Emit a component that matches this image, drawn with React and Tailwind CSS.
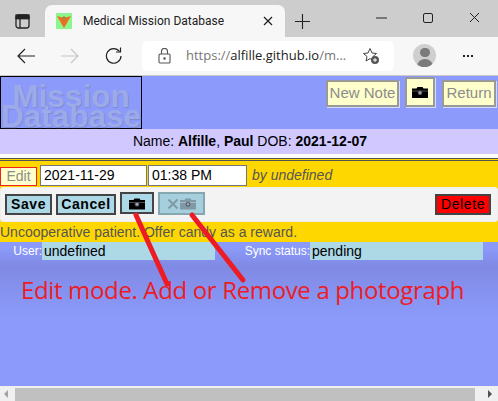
import React from "react";

const sans = "font-['Liberation_Sans',Arial,sans-serif]";

function Camera({ className = "" }) {
  return (
    <svg viewBox="0 0 16 12" className={className}>
      <path d="M0 2.500h4.500l1-1.500h5l1 1.500H16V12H0z" fill="currentColor" />
      <path d="M0 5h16" stroke="#fff" strokeWidth="0.600" opacity="0.500" />
      <circle cx="8" cy="6.800" r="2.400" fill="#556" />
      <circle cx="8" cy="6.800" r="1.200" fill="#aab" />
    </svg>
  );
}

function BrowserChrome() {
  return (
    <div className="shrink-0">
      <div className="flex h-[37px] bg-[#cdcdcd] relative">
        <div className="w-[45px] flex items-center justify-center">
          <svg width="16" height="15" viewBox="0 0 16 15" fill="none" stroke="#222" strokeWidth="1.300" className="mt-[6px]">
            <rect x="1" y="1" width="13" height="13" rx="2.500" />
            <path d="M1 4.500h13M5 4.500V14" />
            <rect x="1" y="1" width="13" height="3.500" fill="#222" />
          </svg>
        </div>
        <div className="mt-[5px] w-[240px] bg-[#f7f7f7] rounded-t-[7px] flex items-center pl-[11px]">
          <svg width="16" height="16" viewBox="0 0 16 16" className="shrink-0">
            <rect width="16" height="16" fill="#8df58d" />
            <path d="M1 3l5 1.500L8 3l2 1.500L15 3 8 15z" fill="#ee6c1f" />
            <path d="M6.500 4h3L8 8z" fill="#7a9a50" />
          </svg>
          <span className="ml-[11px] text-[12px] text-[#222] whitespace-nowrap font-['Roboto',sans-serif]">Medical Mission Database</span>
          <svg width="10" height="10" viewBox="0 0 10 10" className="ml-auto mr-[12px]" stroke="#222" strokeWidth="1.300">
            <path d="M1 1l8 8M9 1L1 9" />
          </svg>
        </div>
        <svg width="15" height="15" viewBox="0 0 15 15" className="ml-[10px] mt-[14px]" stroke="#222" strokeWidth="1.100">
          <path d="M7.500 0v15M0 7.500h15" />
        </svg>
        <div className="ml-auto flex items-center mt-[-2px] pr-[18px] gap-[36px]">
          <svg width="11" height="2" stroke="#222"><path d="M0 1h11" /></svg>
          <svg width="10" height="10" fill="none" stroke="#222"><rect x="0.500" y="0.500" width="9" height="9" rx="1.500" /></svg>
          <svg width="11" height="11" stroke="#222"><path d="M1 1l9 9M10 1l-9 9" /></svg>
        </div>
      </div>
      <div className="flex items-center h-[39px] pb-[1px] bg-[#f7f7f7] border-b border-[#c9c9c9] relative">
        <svg width="18" height="16" viewBox="0 0 18 16" className="ml-[17px]" fill="none" stroke="#222" strokeWidth="1.200">
          <path d="M18 8H1M8 1L1 8l7 7" />
        </svg>
        <svg width="18" height="16" viewBox="0 0 18 16" className="ml-[26px]" fill="none" stroke="#c5c5c5" strokeWidth="1.200">
          <path d="M0 8h17M10 1l7 7-7 7" />
        </svg>
        <svg width="17" height="17" viewBox="0 0 17 17" className="ml-[26px]" fill="none" stroke="#222" strokeWidth="1.200">
          <path d="M14.500 4.500A7.300 7.300 0 1 0 16 9" />
          <path d="M15.500 0.500v4.500H11" />
        </svg>
        <div className="ml-[20px] w-[252px] h-[30px] bg-white rounded-[5px] flex items-center pl-[16px]">
          <svg width="13" height="16" viewBox="0 0 13 16" fill="none" stroke="#555" strokeWidth="1.100">
            <rect x="1" y="6" width="11" height="9" rx="1" />
            <path d="M3.500 6V3.500a3 3 0 0 1 6 0V6" />
            <circle cx="6.500" cy="10.500" r="0.700" fill="#555" />
          </svg>
          <span className="ml-[15px] text-[13px] text-[#777] whitespace-nowrap font-['Open_Sans',sans-serif]">
            https://<span className="text-[#222]">alfille.github.io</span>/m...
          </span>
          <svg width="18" height="18" viewBox="0 0 18 18" className="ml-[16px]">
            <path d="M8 1.500l2 4.500 4.500.5-3.400 3 1 4.500-4.100-2.400L4 14l1-4.500-3.500-3L6 6z" fill="none" stroke="#444" />
            <circle cx="13" cy="13" r="4" fill="#555" />
            <path d="M13 11v4M11 13h4" stroke="#fff" />
          </svg>
        </div>
        <div className="ml-[19px] w-[23px] h-[23px] rounded-full bg-[#cfcfcf] overflow-hidden flex flex-col items-center">
          <div className="mt-[4px] w-[10px] h-[10px] rounded-full bg-[#7b7b7b]" />
          <div className="mt-[2px] w-[16px] h-[10px] rounded-t-full bg-[#7b7b7b]" />
        </div>
        <span className="ml-[27px] flex gap-[2px]">
          <i className="w-[2px] h-[2px] bg-[#222]" />
          <i className="w-[2px] h-[2px] bg-[#222]" />
          <i className="w-[2px] h-[2px] bg-[#222]" />
        </span>
      </div>
    </div>
  );
}

function TopButton({ children, className = "" }) {
  return (
    <div className={`flex items-center justify-center bg-[#ffffcc] border-[2px] border-[#999] shadow-[1px_1px_0_#d5daff] text-[#8c8c8c] text-[15px] ${className}`}>
      {children}
    </div>
  );
}

function EditButton({ children, className = "" }) {
  return (
    <div className={`flex items-center justify-center h-[21px] bg-[#add8e6] border-[2px] border-[#444] font-bold tracking-[0.6px] text-[14px] text-black ${className}`}>
      {children}
    </div>
  );
}

export default function App() {
  return (
    <div className={`w-[498px] h-[401px] overflow-hidden flex flex-col relative ${sans}`}>
      <BrowserChrome />
      <div className="flex-1 min-h-0 flex flex-col bg-[linear-gradient(to_bottom,#8c9bfb_0,#8c9bfb_170px,#808ae4_190px,#8c9bfb_245px)]">
        <div className="flex h-[53px]">
          <div className="w-[142px] h-[53px] border border-black text-center whitespace-nowrap text-[#9caaea] font-bold text-[31.5px] leading-[20px] pt-[9px] [text-shadow:1px_1px_1px_#7f8ad2]">
            <div>Mission</div>
            <div>Database</div>
          </div>
          <div className="ml-auto flex items-start pr-[2px]">
            <TopButton className="mt-[4px] w-[73px] h-[27px]">New Note</TopButton>
            <TopButton className="ml-[6px] mt-[1px] w-[30px] h-[30px]">
              <Camera className="w-[16px] h-[12px] text-black" />
            </TopButton>
            <TopButton className="ml-[7px] mt-[4px] w-[54px] h-[27px]">Return</TopButton>
          </div>
        </div>
        <div className="h-[25px] bg-[#d0c8ff] flex items-center justify-center pl-[2px] text-[14px] text-black">
          <span>Name: <b>Alfille</b>, <b>Paul</b> DOB: <b>2021-12-07</b></span>
        </div>
        <div className="h-[4px] bg-white" />
        <div className="h-[3px] bg-[#ffd700] border-y border-[#555]" />
        <div className="bg-[#ffd700]">
          <div className="flex items-end h-[26px] pb-[1px]">
            <div className="w-[37px] h-[19px] bg-[#ffffcc] border border-[#ee2222] flex items-center justify-center text-[14px] text-[#8c8c8c]">Edit</div>
            <div className="ml-[3px] w-[107px] h-[21px] bg-white border border-[#777] text-[14px] pl-[3px] leading-[19px] text-black">2021-11-29</div>
            <div className="ml-[1px] w-[99px] h-[21px] bg-white border border-[#777] text-[14px] pl-[3px] leading-[19px] text-black">01:38 PM</div>
            <span className="ml-[5px] italic text-[14px] leading-[21px] text-[#555]">by undefined</span>
          </div>
          <div className="flex items-center h-[35px] bg-[#f3f3f3] border border-[#eee] rounded-[3px] pl-[4px] pr-[6px]">
            <EditButton className="w-[47px]">Save</EditButton>
            <EditButton className="ml-[4px] w-[60px]">Cancel</EditButton>
            <EditButton className="ml-[4px] w-[34px] !h-[22px] mb-[3px]">
              <Camera className="w-[16px] h-[13px] text-black" />
            </EditButton>
            <div className="ml-[4px] mb-[2px] w-[47px] h-[23px] bg-[#a6cfdd] border-[2px] border-[#86a7b2] flex items-center justify-center gap-[2px]">
              <svg width="10" height="10" stroke="#7f9aa6" strokeWidth="2"><path d="M0.500 0.500l9 9M9.500 0.500l-9 9" /></svg>
              <Camera className="w-[16px] h-[13px] text-[#7f9aa6]" />
            </div>
            <EditButton className="ml-auto w-[56px] !bg-[#ff0000] !font-normal">Delete</EditButton>
          </div>
          <div className="h-[20px] flex items-center text-[14px] text-[#555] whitespace-nowrap">
            Uncooperative patient. Offer candy as a reward.
          </div>
        </div>
        <div className="flex h-[18px] items-stretch">
          <div className="w-[42px] text-right text-[12px] leading-[18px] text-white">User:</div>
          <div className="w-[173px] bg-[#add8e6] text-[14px] leading-[18px] pl-[2px] text-black">undefined</div>
          <div className="w-[95px] text-right text-[12px] leading-[18px] text-white">Sync status:</div>
          <div className="w-[173px] bg-[#add8e6] text-[14px] leading-[18px] pl-[2px] text-black">pending</div>
        </div>
        <div className="mt-[15px] pl-[21px] text-[24px] leading-[30px] text-[#ed1c24] whitespace-nowrap font-['Open_Sans',sans-serif] tracking-[-0.35px]">
          Edit mode. Add or Remove a photograph
        </div>
      </div>
      <div className="h-[15px] shrink-0 bg-[#f0f0f0] flex items-center">
        <span className="ml-[4px] w-0 h-0 border-y-[4px] border-y-transparent border-r-[4px] border-r-[#a3a3a3]" />
        <div className="ml-[7px] w-[460px] h-[13px] mt-[2px] bg-[#c0c0c0]" />
        <span className="ml-auto mr-[6px] w-0 h-0 border-y-[4px] border-y-transparent border-l-[4px] border-l-[#505050]" />
      </div>
      <svg className="absolute left-0 top-0 pointer-events-none" width="498" height="401" fill="none" stroke="#ed1c24" strokeWidth="5" strokeLinecap="round">
        <path d="M136 215L167 284" />
        <path d="M192 215L243 280" />
      </svg>
    </div>
  );
}
